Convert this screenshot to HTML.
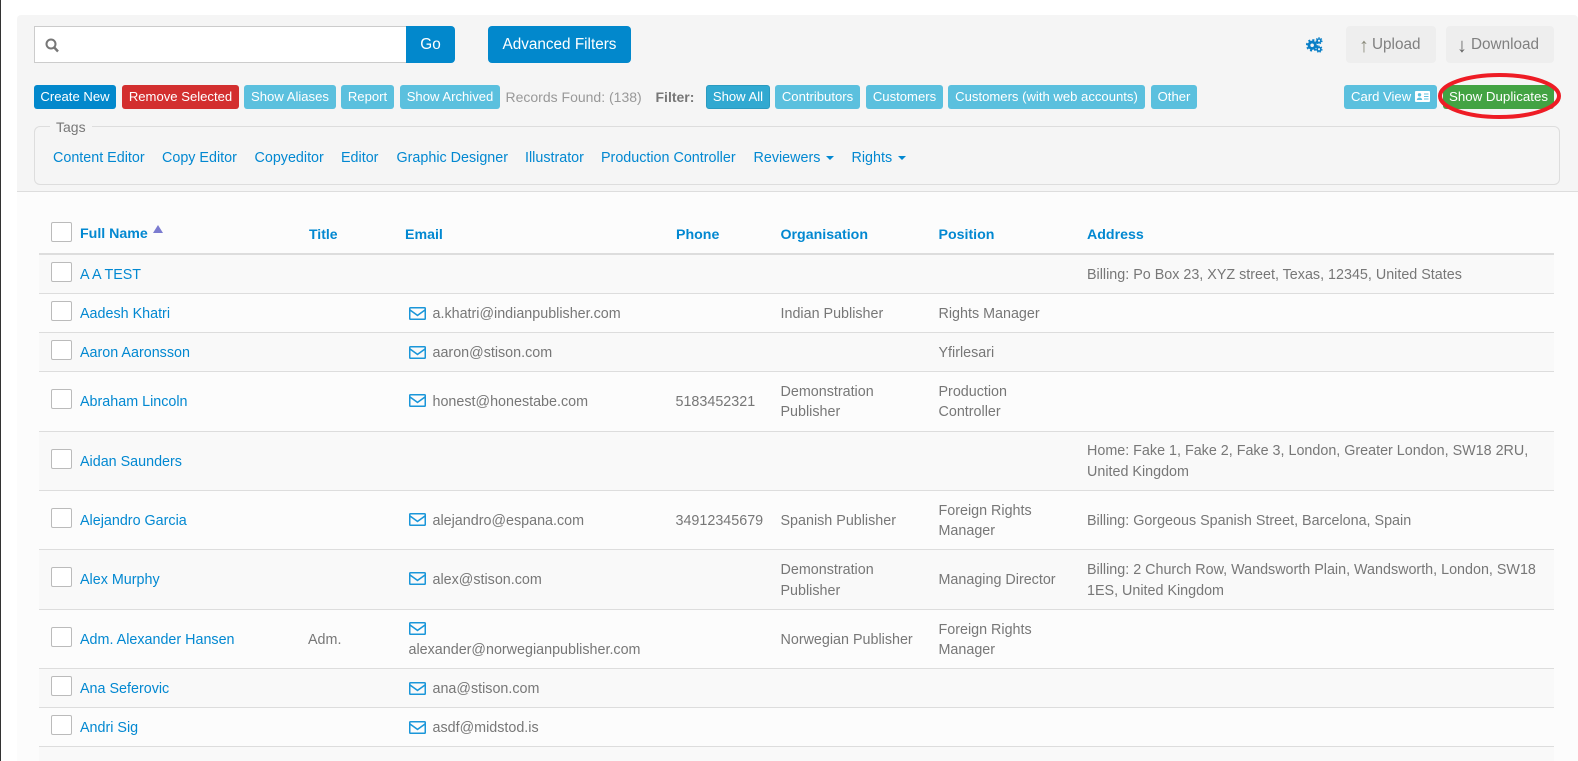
<!DOCTYPE html>
<html><head><meta charset="utf-8"><style>
html,body{margin:0;padding:0;width:1578px;height:761px;overflow:hidden;background:#fff;font-family:"Liberation Sans",Arial,sans-serif;font-size:14.33px;color:#777}
div,a,span.a{position:absolute;box-sizing:border-box}
.t{white-space:nowrap;line-height:20px;height:20px;margin-top:1px}
.l{color:#0288d1}
.h{font-weight:bold;color:#0288d1;font-size:14.2px;margin-top:1px}
.b{height:24px;top:85px;border-radius:3px;color:#fff;font-size:13.1px;line-height:24px;text-align:center;white-space:nowrap;background:#5bc0de}
.big{height:37px;top:26px;border-radius:4px;font-size:15.3px;line-height:38px;text-align:center;white-space:nowrap}
.line{left:39px;width:1515px;height:1px;background:#ddd}
.s{left:39px;width:1515px;background:#f9f9f9}
.c{left:51px;width:21px;height:20px;background:#fff;border:1px solid #bbb;border-radius:2px}
</style></head><body>
<div style="left:0;top:0;width:1px;height:761px;background:#333"></div>
<div style="left:17px;top:15px;width:1561px;height:176px;background:#f5f5f5;border-radius:4px 4px 0 0"></div>
<div style="left:17px;top:192px;width:1561px;height:569px;background:#fcfcfc"></div>
<div style="left:17px;top:191px;width:1561px;height:1px;background:#ddd"></div>

<div style="left:34px;top:26px;width:373px;height:37px;background:#fff;border:1px solid #ccc;border-right:0"></div>
<svg style="position:absolute;left:45px;top:38px" width="15" height="15" viewBox="0 0 15 15"><circle cx="6" cy="6" r="4.5" fill="none" stroke="#777" stroke-width="2"/><path d="M9.3 9.5L13 13.5" stroke="#777" stroke-width="2.4"/></svg>
<div class="big" style="left:406px;width:49px;background:#0288cc;color:#fff;border-radius:0 4px 4px 0">Go</div>
<div class="big" style="left:488px;width:143px;background:#0288cc;color:#fff">Advanced Filters</div>

<svg style="position:absolute;left:1305.5px;top:36.5px" width="17" height="16" viewBox="0 0 18 17">
<circle cx="6.5" cy="8.8" r="3.4" fill="none" stroke="#0a7fc7" stroke-width="3"/>
<circle cx="6.5" cy="8.8" r="5.6" fill="none" stroke="#0a7fc7" stroke-width="2" stroke-dasharray="2.2 2.2"/>
<circle cx="13.8" cy="4" r="2" fill="none" stroke="#0a7fc7" stroke-width="1.7"/>
<circle cx="13.8" cy="4" r="3.2" fill="none" stroke="#0a7fc7" stroke-width="1.2" stroke-dasharray="1.4 1.4"/>
<circle cx="13.8" cy="13" r="2" fill="none" stroke="#0a7fc7" stroke-width="1.7"/>
<circle cx="13.8" cy="13" r="3.2" fill="none" stroke="#0a7fc7" stroke-width="1.2" stroke-dasharray="1.4 1.4"/>
</svg>
<div class="big" style="left:1346px;width:90px;background:#eee;color:#808080"></div>
<div class="big" style="left:1358px;top:27px;width:12px;color:#8a8a7a;font-size:20px">↑</div>
<div class="big" style="left:1372px;width:56px;text-align:left;color:#808080">Upload</div>
<div class="big" style="left:1446px;width:108px;background:#eee;color:#808080"></div>
<div class="big" style="left:1456px;top:27px;width:12px;color:#666;font-size:20px">↓</div>
<div class="big" style="left:1471px;width:76px;text-align:left;color:#808080">Download</div>

<div class="b" style="left:34px;width:82px;background:#0288cc">Create New</div>
<div class="b" style="left:122px;width:117px;background:#d32f2f">Remove Selected</div>
<div class="b" style="left:244px;width:92px">Show Aliases</div>
<div class="b" style="left:341px;width:53px">Report</div>
<div class="b" style="left:400px;width:100px">Show Archived</div>
<div class="t" style="left:505.5px;top:87px;color:#999;font-size:14px;margin-top:0">Records Found: (138)</div>
<div class="t" style="left:655.5px;top:86px;font-weight:bold;color:#777;font-size:14px">Filter:</div>
<div class="b" style="left:706px;width:64px;background:#31a9d1;border:1px solid #2a9bc0;line-height:22px">Show All</div>
<div class="b" style="left:775px;width:85px">Contributors</div>
<div class="b" style="left:866px;width:77px">Customers</div>
<div class="b" style="left:948px;width:197px">Customers (with web accounts)</div>
<div class="b" style="left:1151px;width:46px">Other</div>
<div class="b" style="left:1344px;width:93px;text-align:left;padding-left:7px">Card View</div>
<svg style="position:absolute;left:1415px;top:91px" width="15" height="11" viewBox="0 0 15 11"><rect width="15" height="11" rx="1" fill="#fff"/><circle cx="4.5" cy="3.8" r="1.7" fill="#5bc0de"/><path d="M1.8 9a2.7 2.4 0 0 1 5.4 0z" fill="#5bc0de"/><path d="M9 3h4.5M9 5.5h4.5M9 8h4.5" stroke="#5bc0de"/></svg>
<div class="b" style="left:1443px;width:111px;background:#43a343;font-size:13.3px">Show Duplicates</div>
<svg style="position:absolute;left:1436px;top:72px" width="127" height="48" viewBox="0 0 127 48"><ellipse cx="63.5" cy="24" rx="59.5" ry="21" fill="none" stroke="#ee1c25" stroke-width="4"/></svg>

<div style="left:34px;top:126px;width:1526px;height:59px;border:1px solid #ddd;border-radius:6px"></div>
<div class="t" style="left:50px;top:117px;background:#f5f5f5;padding:0 6px;color:#777;font-size:14px;margin-top:0">Tags</div>
<a class="t l" style="left:53px;top:147px">Content Editor</a>
<a class="t l" style="left:162px;top:147px">Copy Editor</a>
<a class="t l" style="left:254.5px;top:147px">Copyeditor</a>
<a class="t l" style="left:341px;top:147px">Editor</a>
<a class="t l" style="left:396.5px;top:147px">Graphic Designer</a>
<a class="t l" style="left:525px;top:147px">Illustrator</a>
<a class="t l" style="left:601px;top:147px">Production Controller</a>
<a class="t l" style="left:753.5px;top:147px">Reviewers</a>
<div style="left:826px;top:156px;border:4px solid transparent;border-top-color:#0288d1;border-bottom:0"></div>
<a class="t l" style="left:851.5px;top:147px">Rights</a>
<div style="left:898px;top:156px;border:4px solid transparent;border-top-color:#0288d1;border-bottom:0"></div>

<!-- stripes -->
<div class="s" style="top:255px;height:38px"></div>
<div class="s" style="top:332px;height:39px"></div>
<div class="s" style="top:431px;height:59px"></div>
<div class="s" style="top:549px;height:60px"></div>
<div class="s" style="top:668px;height:39px"></div>
<div class="s" style="top:746px;height:15px"></div>
<!-- lines -->
<div class="line" style="top:253px;height:2px"></div>
<div class="line" style="top:293px"></div><div class="line" style="top:332px"></div><div class="line" style="top:371px"></div><div class="line" style="top:431px"></div><div class="line" style="top:490px"></div><div class="line" style="top:549px"></div><div class="line" style="top:609px"></div><div class="line" style="top:668px"></div><div class="line" style="top:707px"></div><div class="line" style="top:746px"></div>

<!-- header -->
<div class="c" style="top:222px"></div>
<div class="t h" style="left:80px;top:223px">Full Name</div>
<div style="left:153px;top:225px;border:5px solid transparent;border-bottom:8px solid #7b7bd0;border-top:0"></div>
<div class="t h" style="left:309px;top:223px;font-size:14px">Title</div>
<div class="t h" style="left:405px;top:224px">Email</div>
<div class="t h" style="left:676px;top:224px">Phone</div>
<div class="t h" style="left:780.5px;top:224px">Organisation</div>
<div class="t h" style="left:938.5px;top:224px">Position</div>
<div class="t h" style="left:1087px;top:224px">Address</div>

<!-- checkboxes -->
<div class="c" style="top:262px"></div><div class="c" style="top:301px"></div><div class="c" style="top:340px"></div><div class="c" style="top:389px"></div><div class="c" style="top:449px"></div><div class="c" style="top:508px"></div><div class="c" style="top:567px"></div><div class="c" style="top:627px"></div><div class="c" style="top:676px"></div><div class="c" style="top:715px"></div>

<!-- names -->
<a class="t l" style="left:80px;top:264px">A A TEST</a>
<a class="t l" style="left:80px;top:303px">Aadesh Khatri</a>
<a class="t l" style="left:80px;top:342px">Aaron Aaronsson</a>
<a class="t l" style="left:80px;top:391px">Abraham Lincoln</a>
<a class="t l" style="left:80px;top:451px">Aidan Saunders</a>
<a class="t l" style="left:80px;top:510px">Alejandro Garcia</a>
<a class="t l" style="left:80px;top:569px">Alex Murphy</a>
<a class="t l" style="left:80px;top:629px">Adm. Alexander Hansen</a>
<a class="t l" style="left:80px;top:678px">Ana Seferovic</a>
<a class="t l" style="left:80px;top:717px">Andri Sig</a>
<div class="t" style="left:308px;top:629px">Adm.</div>

<!-- mail icons -->
<svg width="0" height="0" style="position:absolute"><defs><g id="m"><rect x=".75" y=".75" width="15.5" height="11.5" rx=".8" fill="none" stroke="#1a96d9" stroke-width="1.5"/><path d="M1 3l7.5 5.4L16 3" fill="none" stroke="#1a96d9" stroke-width="1.5"/></g></defs></svg>
<svg style="position:absolute;left:409px;top:307px" width="17" height="13"><use href="#m"/></svg>
<svg style="position:absolute;left:409px;top:346px" width="17" height="13"><use href="#m"/></svg>
<svg style="position:absolute;left:409px;top:394px" width="17" height="13"><use href="#m"/></svg>
<svg style="position:absolute;left:409px;top:513px" width="17" height="13"><use href="#m"/></svg>
<svg style="position:absolute;left:409px;top:572px" width="17" height="13"><use href="#m"/></svg>
<svg style="position:absolute;left:409px;top:622px" width="17" height="13"><use href="#m"/></svg>
<svg style="position:absolute;left:409px;top:682px" width="17" height="13"><use href="#m"/></svg>
<svg style="position:absolute;left:409px;top:721px" width="17" height="13"><use href="#m"/></svg>

<div class="t" style="left:432.5px;top:303px">a.khatri@indianpublisher.com</div>
<div class="t" style="left:432.5px;top:342px">aaron@stison.com</div>
<div class="t" style="left:432.5px;top:391px">honest@honestabe.com</div>
<div class="t" style="left:432.5px;top:510px">alejandro@espana.com</div>
<div class="t" style="left:432.5px;top:569px">alex@stison.com</div>
<div class="t" style="left:408.5px;top:639px">alexander@norwegianpublisher.com</div>
<div class="t" style="left:432.5px;top:678px">ana@stison.com</div>
<div class="t" style="left:432.5px;top:717px">asdf@midstod.is</div>

<div class="t" style="left:675.5px;top:391px">5183452321</div>
<div class="t" style="left:675.5px;top:510px">34912345679</div>

<div class="t" style="left:780.5px;top:303px">Indian Publisher</div>
<div class="t" style="left:780.5px;top:381px">Demonstration</div>
<div class="t" style="left:780.5px;top:401px">Publisher</div>
<div class="t" style="left:780.5px;top:510px">Spanish Publisher</div>
<div class="t" style="left:780.5px;top:559px">Demonstration</div>
<div class="t" style="left:780.5px;top:580px">Publisher</div>
<div class="t" style="left:780.5px;top:629px">Norwegian Publisher</div>

<div class="t" style="left:938.5px;top:303px">Rights Manager</div>
<div class="t" style="left:938.5px;top:342px">Yfirlesari</div>
<div class="t" style="left:938.5px;top:381px">Production</div>
<div class="t" style="left:938.5px;top:401px">Controller</div>
<div class="t" style="left:938.5px;top:500px">Foreign Rights</div>
<div class="t" style="left:938.5px;top:520px">Manager</div>
<div class="t" style="left:938.5px;top:569px">Managing Director</div>
<div class="t" style="left:938.5px;top:619px">Foreign Rights</div>
<div class="t" style="left:938.5px;top:639px">Manager</div>

<div class="t" style="left:1087px;top:264px">Billing: Po Box 23, XYZ street, Texas, 12345, United States</div>
<div class="t" style="left:1087px;top:440px">Home: Fake 1, Fake 2, Fake 3, London, Greater London, SW18 2RU,</div>
<div class="t" style="left:1087px;top:461px">United Kingdom</div>
<div class="t" style="left:1087px;top:510px">Billing: Gorgeous Spanish Street, Barcelona, Spain</div>
<div class="t" style="left:1087px;top:559px">Billing: 2 Church Row, Wandsworth Plain, Wandsworth, London, SW18</div>
<div class="t" style="left:1087px;top:580px">1ES, United Kingdom</div>
</body></html>
